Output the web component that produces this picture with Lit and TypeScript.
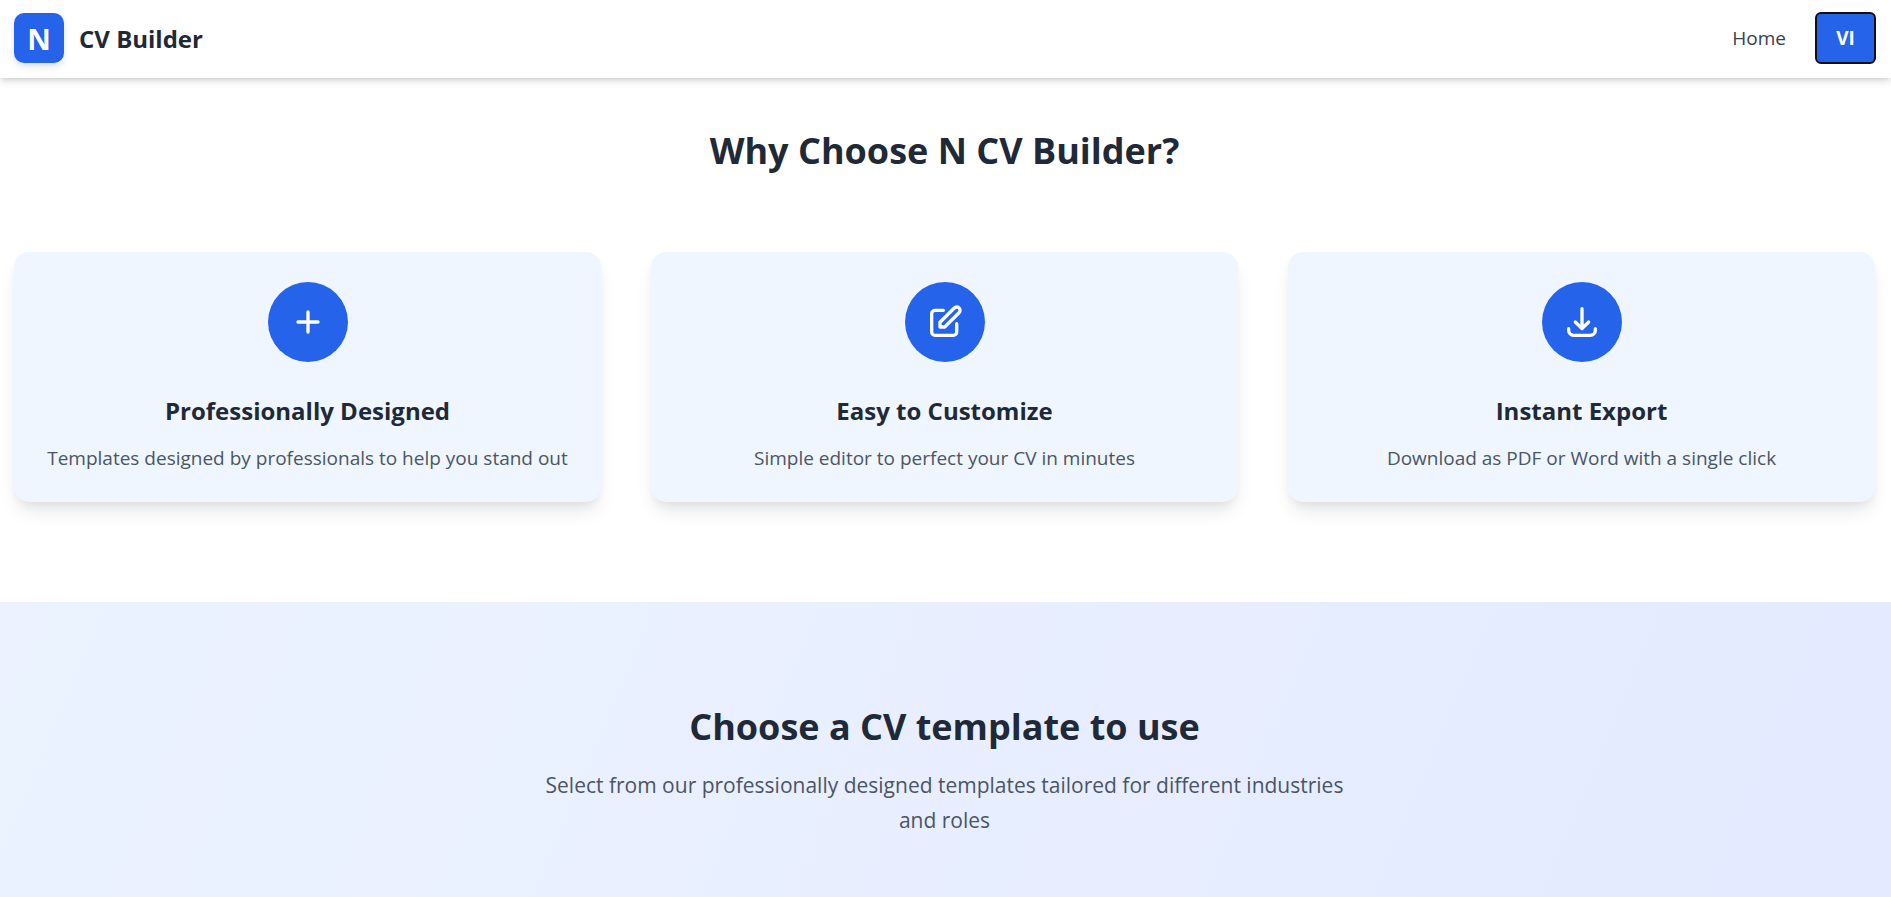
import { LitElement, html, css, svg } from "lit";
import { customElement, property } from "lit/decorators.js";

const icons = {
  plus: svg`<path d="M12 6v12M6 12h12" />`,
  edit: svg`<path d="M11 5H6a2 2 0 00-2 2v11a2 2 0 002 2h11a2 2 0 002-2v-5m-1.414-9.414a2 2 0 112.828 2.828L11.828 15H9v-2.828l8.586-8.586z" />`,
  download: svg`<path d="M4 16v1a3 3 0 003 3h10a3 3 0 003-3v-1m-4-4l-4 4m0 0l-4-4m4 4V4" />`,
};

type IconName = keyof typeof icons;

@customElement("feature-card")
class FeatureCard extends LitElement {
  @property() icon: IconName = "plus";
  @property() heading = "";
  @property() text = "";

  static styles = css`
    :host {
      display: flex;
      flex-direction: column;
      align-items: center;
      padding: 30px 20px 29px;
      border-radius: 15px;
      background: #eff6ff;
      box-shadow: 0 12px 19px -4px rgba(0, 0, 0, 0.1), 0 5px 8px -2px rgba(0, 0, 0, 0.05);
      text-align: center;
    }
    .badge {
      display: flex;
      align-items: center;
      justify-content: center;
      width: 80px;
      height: 80px;
      margin-bottom: 31px;
      border-radius: 50%;
      background: #2563eb;
    }
    .icon {
      width: 40px;
      height: 40px;
      fill: none;
      stroke: #fff;
      stroke-width: 2;
      stroke-linecap: round;
      stroke-linejoin: round;
    }
    h3 {
      margin: 0 0 15px;
      font-size: 24px;
      line-height: 35px;
      font-weight: 700;
      color: #1f2937;
    }
    p {
      margin: 0;
      font-size: 19px;
      line-height: 30px;
      color: #4b5563;
    }
  `;

  render() {
    return html`
      <div class="badge">
        <svg class="icon" viewBox="0 0 24 24" aria-hidden="true">${icons[this.icon]}</svg>
      </div>
      <h3>${this.heading}</h3>
      <p>${this.text}</p>
    `;
  }
}

@customElement("app-root")
class AppRoot extends LitElement {
  static styles = css`
    :host {
      display: flex;
      flex-direction: column;
      min-height: 100vh;
      box-sizing: border-box;
      background: #fff;
      color: #1f2937;
      font-family: "Segoe UI", "Open Sans", sans-serif;
    }
    header {
      display: flex;
      align-items: center;
      justify-content: space-between;
      height: 78px;
      box-sizing: border-box;
      padding: 0 15px 2px 14px;
      background: #fff;
      box-shadow: 0 5px 8px -1px rgba(0, 0, 0, 0.1), 0 2px 5px -1px rgba(0, 0, 0, 0.12);
    }
    .brand {
      display: flex;
      align-items: center;
      gap: 15px;
      color: inherit;
      text-decoration: none;
      font-size: 24px;
      font-weight: 700;
    }
    .logo {
      display: flex;
      align-items: center;
      justify-content: center;
      width: 50px;
      height: 50px;
      border-radius: 10px;
      background: #2563eb;
      color: #fff;
      font-size: 29px;
      box-shadow: 0 5px 8px -1px rgba(0, 0, 0, 0.1), 0 2px 5px -1px rgba(0, 0, 0, 0.06);
    }
    nav {
      display: flex;
      align-items: center;
      gap: 29px;
    }
    .link {
      font-size: 19px;
      color: #374151;
      text-decoration: none;
    }
    .lang {
      width: 61px;
      height: 52px;
      padding: 0;
      border: 2px solid #101010;
      border-radius: 6px;
      background: #2563eb;
      color: #fff;
      font-family: inherit;
      font-size: 19px;
      font-weight: 700;
    }
    .features {
      padding: 48px 16px 100px 14px;
    }
    h2 {
      margin: 0;
      font-size: 36px;
      line-height: 50px;
      font-weight: 700;
      text-align: center;
    }
    .cards {
      display: grid;
      grid-template-columns: repeat(3, 1fr);
      gap: 50px;
      margin-top: 76px;
    }
    .templates {
      flex: 1;
      padding: 100px 16px 50px 14px;
      background: linear-gradient(113deg, #ecf3ff, #e4eaff);
      text-align: center;
    }
    .lead {
      max-width: 830px;
      margin: 16px auto 0;
      font-size: 21px;
      line-height: 35px;
      color: #4b5563;
    }
  `;

  render() {
    return html`
      <header>
        <a class="brand" href="#"><span class="logo">N</span><span>CV Builder</span></a>
        <nav>
          <a class="link" href="#">Home</a>
          <button class="lang" type="button">VI</button>
        </nav>
      </header>
      <section class="features">
        <h2>Why Choose N CV Builder?</h2>
        <div class="cards">
          <feature-card
            icon="plus"
            heading="Professionally Designed"
            text="Templates designed by professionals to help you stand out"
          ></feature-card>
          <feature-card
            icon="edit"
            heading="Easy to Customize"
            text="Simple editor to perfect your CV in minutes"
          ></feature-card>
          <feature-card
            icon="download"
            heading="Instant Export"
            text="Download as PDF or Word with a single click"
          ></feature-card>
        </div>
      </section>
      <section class="templates">
        <h2>Choose a CV template to use</h2>
        <p class="lead">
          Select from our professionally designed templates tailored for different industries and roles
        </p>
      </section>
    `;
  }
}
